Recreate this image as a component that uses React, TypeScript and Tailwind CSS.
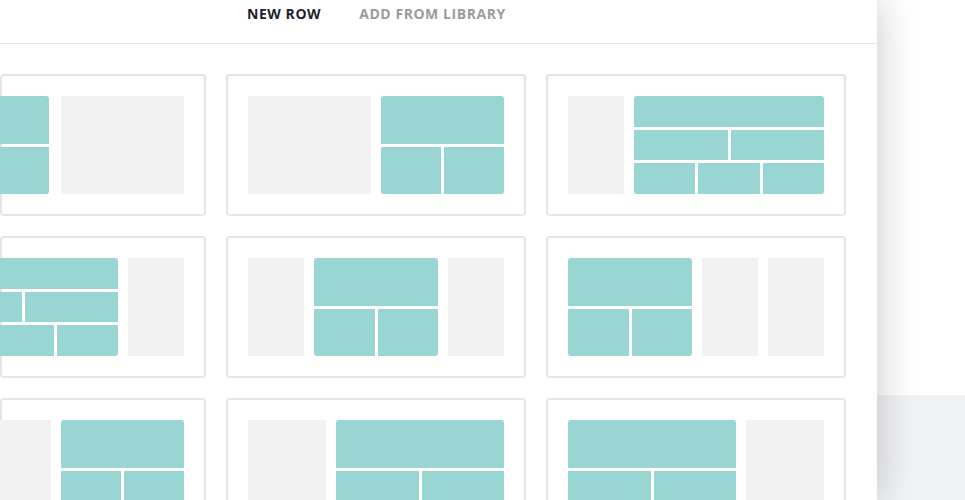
type Block =
  | { kind: 'gray'; w?: number }
  | { kind: 'teal'; w?: number; rows: number[] };

type CardSpec = { blocks: Block[]; clipped?: boolean };

const rows: CardSpec[][] = [
  [
    { clipped: true, blocks: [{ kind: 'teal', w: 121, rows: [1, 2] }, { kind: 'gray', w: 123 }] },
    { blocks: [{ kind: 'gray', w: 123 }, { kind: 'teal', w: 123, rows: [1, 2] }] },
    { blocks: [{ kind: 'gray', w: 56 }, { kind: 'teal', rows: [1, 2, 3] }] },
  ],
  [
    { clipped: true, blocks: [{ kind: 'teal', w: 190, rows: [1, 2, 3] }, { kind: 'gray', w: 56 }] },
    { blocks: [{ kind: 'gray', w: 56 }, { kind: 'teal', rows: [1, 2] }, { kind: 'gray', w: 56 }] },
    { blocks: [{ kind: 'teal', rows: [1, 2] }, { kind: 'gray', w: 56 }, { kind: 'gray', w: 56 }] },
  ],
  [
    { clipped: true, blocks: [{ kind: 'gray', w: 123 }, { kind: 'teal', w: 123, rows: [1, 2] }] },
    { blocks: [{ kind: 'gray', w: 78 }, { kind: 'teal', rows: [1, 2] }] },
    { blocks: [{ kind: 'teal', rows: [1, 2] }, { kind: 'gray', w: 78 }] },
  ],
];

function TealBlock({ w, rows }: { w?: number; rows: number[] }) {
  return (
    <div
      className={`flex flex-col gap-[3px] overflow-hidden rounded-[3px] shrink-0 ${w ? '' : 'flex-1'}`}
      style={w ? { width: w } : undefined}
    >
      {rows.map((n, i) => (
        <div key={i} className="flex flex-1 gap-[3px]">
          {Array.from({ length: n }).map((_, j) => (
            <div key={j} className="flex-1 bg-[#98d5d3]" />
          ))}
        </div>
      ))}
    </div>
  );
}

function LayoutCard({ spec }: { spec: CardSpec }) {
  return (
    <div
      className={`flex h-[142px] rounded-[4px] border-2 border-[#e5e5e5] bg-white px-5 py-5 ${
        spec.clipped ? 'w-[206px] justify-end' : 'w-[300px]'
      }`}
    >
      <div className="flex w-[256px] shrink-0 justify-between gap-[10px]">
        {spec.blocks.map((b, i) =>
          b.kind === 'gray' ? (
            <div key={i} className="shrink-0 bg-[#f1f1f1]" style={{ width: b.w }} />
          ) : (
            <TealBlock key={i} w={b.w} rows={b.rows} />
          )
        )}
      </div>
    </div>
  );
}

export default function App() {
  return (
    <div className="flex h-[500px] w-full overflow-hidden bg-white font-['Open_Sans',sans-serif]">
      <div className="relative z-10 w-[877px] shrink-0 bg-white shadow-[0_0_40px_rgba(0,0,0,0.22)]">
        <header className="flex h-[44px] gap-[38px] border-b border-[#e6e6e6] pl-[247px] pt-[4px] text-[14px] font-bold leading-5 tracking-[0.55px]">
          <span className="text-[#1e2230]">NEW ROW</span>
          <span className="text-[#9b9b9b]">ADD FROM LIBRARY</span>
        </header>
        <div className="flex flex-col gap-5 pt-[30px]">
          {rows.map((row, i) => (
            <div key={i} className="flex gap-5">
              {row.map((spec, j) => (
                <LayoutCard key={j} spec={spec} />
              ))}
            </div>
          ))}
        </div>
      </div>
      <div className="flex flex-1 flex-col">
        <div className="flex-1 bg-white" />
        <div className="h-[105px] bg-[#f1f2f4]" />
      </div>
    </div>
  );
}
